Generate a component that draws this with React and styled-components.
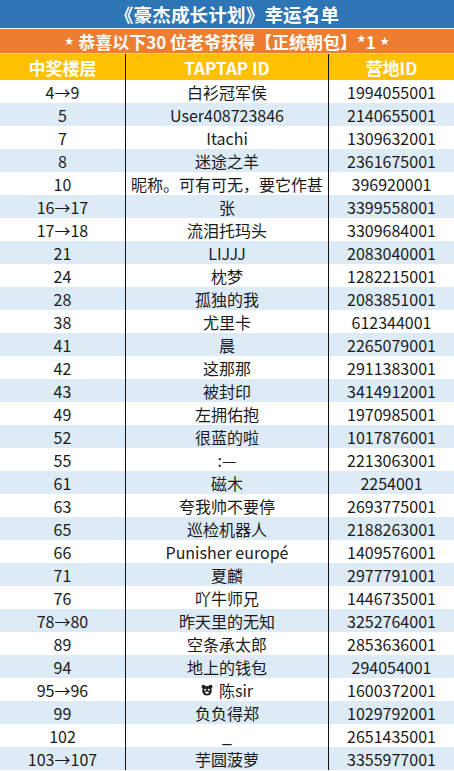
import React from "react";
import styled, { createGlobalStyle } from "styled-components";

const GlobalStyle = createGlobalStyle`
  html, body {
    margin: 0;
    padding: 0;
    background: #ffffff;
  }
  body {
    font-family: "Noto Sans CJK SC", "Noto Sans", sans-serif;
  }
`;

const Page = styled.div`
  width: 454px;
  display: flex;
  flex-direction: column;
`;

const TitleBar = styled.div`
  height: 28px;
  background: #2e75b6;
  color: #ffffff;
  font-size: 18.5px;
  font-weight: 700;
  display: flex;
  align-items: center;
  justify-content: center;
  border-bottom: 1px solid #f4f4f4;
  letter-spacing: 0.2px;
`;

const NoticeBar = styled.div`
  height: 24px;
  background: #ed7d31;
  color: #ffffff;
  font-size: 17px;
  font-weight: 700;
  display: flex;
  align-items: center;
  justify-content: center;
  border-bottom: 1px solid #f2d9a0;
`;

const Star = styled.span`
  font-family: "DejaVu Sans", sans-serif;
  font-size: 11px;
  margin: ${({ side }) => (side === "left" ? "0 4px 0 0" : "0 0 0 4px")};
`;

const Grid = styled.div`
  display: grid;
  grid-template-columns: 126px 203px 125px;
`;

const HeadCell = styled.div`
  height: 26px;
  background: #ffc000;
  color: #ffffff;
  font-size: 17px;
  font-weight: 700;
  display: flex;
  align-items: center;
  justify-content: center;
  box-sizing: border-box;
  border-right: ${({ last }) => (last ? "none" : "1px solid #111")};
`;

const Cell = styled.div`
  height: 23px;
  background: ${({ shade }) => (shade ? "#ddebf7" : "#ffffff")};
  color: #1a1a1a;
  font-size: 16px;
  display: flex;
  align-items: center;
  justify-content: center;
  box-sizing: border-box;
  white-space: nowrap;
  border-right: ${({ last }) => (last ? "none" : "1px solid #111")};
`;

const Underscore = styled.span`
  font-family: "Liberation Sans", sans-serif;
  line-height: 16px;
  position: relative;
  top: 1px;
`;

const Badge = styled.svg`
  width: 12px;
  height: 12px;
  margin-right: 6px;
`;

const rows = [
  ["4→9", "白衫冠军侯", "1994055001"],
  ["5", "User408723846", "2140655001"],
  ["7", "Itachi", "1309632001"],
  ["8", "迷途之羊", "2361675001"],
  ["10", "昵称。可有可无，要它作甚", "396920001"],
  ["16→17", "张", "3399558001"],
  ["17→18", "流泪托玛头", "3309684001"],
  ["21", "LIJJJ", "2083040001"],
  ["24", "枕梦", "1282215001"],
  ["28", "孤独的我", "2083851001"],
  ["38", "尤里卡", "612344001"],
  ["41", "晨", "2265079001"],
  ["42", "这那那", "2911383001"],
  ["43", "被封印", "3414912001"],
  ["49", "左拥佑抱", "1970985001"],
  ["52", "很蓝的啦", "1017876001"],
  ["55", ":—", "2213063001"],
  ["61", "磁木", "2254001"],
  ["63", "夸我帅不要停", "2693775001"],
  ["65", "巡检机器人", "2188263001"],
  ["66", "Punisher europé", "1409576001"],
  ["71", "夏麟", "2977791001"],
  ["76", "吖牛师兄", "1446735001"],
  ["78→80", "昨天里的无知", "3252764001"],
  ["89", "空条承太郎", "2853636001"],
  ["94", "地上的钱包", "294054001"],
  ["95→96", "badge", "1600372001"],
  ["99", "负负得郑", "1029792001"],
  ["102", "_", "2651435001"],
  ["103→107", "芋圆菠萝", "3355977001"],
];

function BearBadge() {
  return (
    <Badge viewBox="0 0 12 12">
      <circle cx="2.5" cy="2.8" r="2" fill="#222" />
      <circle cx="9.5" cy="2.8" r="2" fill="#222" />
      <circle cx="6" cy="6.8" r="4.8" fill="#222" />
      <circle cx="4.2" cy="5.8" r="1" fill="#fff" />
      <circle cx="7.8" cy="5.8" r="1" fill="#fff" />
      <ellipse cx="6" cy="8.6" rx="1.8" ry="1.2" fill="#fff" />
    </Badge>
  );
}

function renderName(name) {
  if (name === "badge") {
    return (
      <>
        <BearBadge />
        陈sir
      </>
    );
  }
  if (name === "_") return <Underscore>_</Underscore>;
  return name;
}

export default function App() {
  return (
    <Page>
      <GlobalStyle />
      <TitleBar>《豪杰成长计划》幸运名单</TitleBar>
      <NoticeBar>
        <Star side="left">★</Star>
        恭喜以下30 位老爷获得【正统朝包】*1
        <Star side="right">★</Star>
      </NoticeBar>
      <Grid>
        <HeadCell>中奖楼层</HeadCell>
        <HeadCell>TAPTAP ID</HeadCell>
        <HeadCell last>营地ID</HeadCell>
        {rows.map(([floor, name, id], i) => (
          <React.Fragment key={floor}>
            <Cell shade={i % 2 === 1}>{floor}</Cell>
            <Cell shade={i % 2 === 1}>{renderName(name)}</Cell>
            <Cell shade={i % 2 === 1} last>
              {id}
            </Cell>
          </React.Fragment>
        ))}
      </Grid>
    </Page>
  );
}
